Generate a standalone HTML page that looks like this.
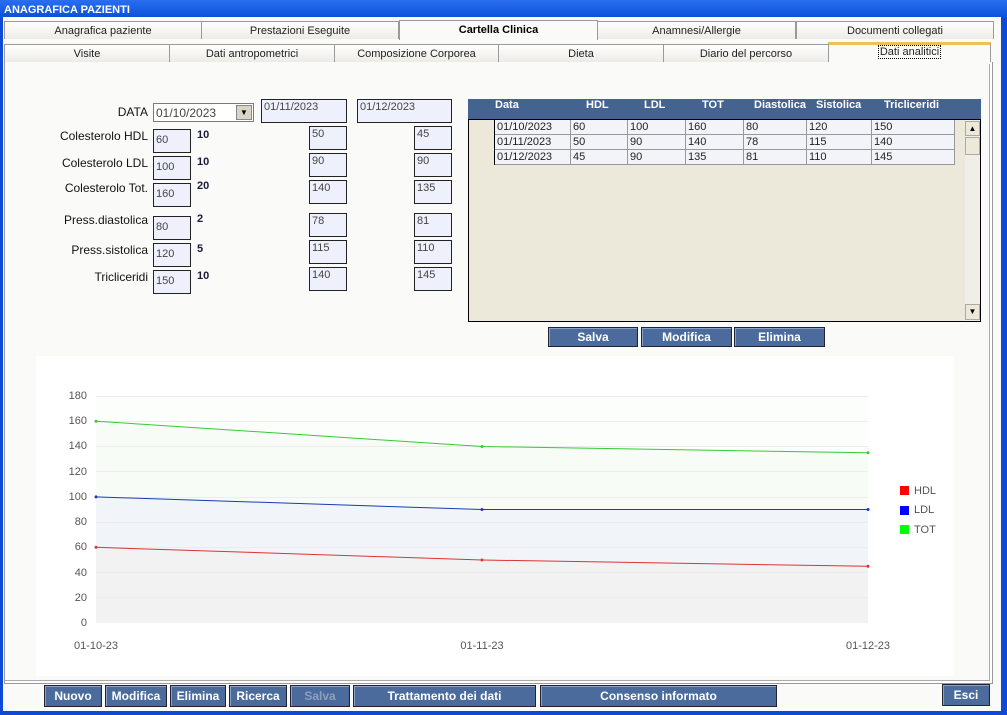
<!DOCTYPE html>
<html><head><style>
*{margin:0;padding:0;box-sizing:border-box}
body{width:1007px;height:715px;overflow:hidden;background:#0d4bd6;font-family:"Liberation Sans",sans-serif;position:relative}
.a{position:absolute}
#win{left:3px;top:17px;width:998px;height:694px;background:#fafbf8}
.title{left:0;top:0;width:1007px;height:18px;background:linear-gradient(#2a6ff0,#0a50d8);color:#fff;font-weight:bold;font-size:11px;padding:4px 0 0 4px;letter-spacing:0}
.tab{position:absolute;height:18px;border:1px solid #9a9a9a;border-bottom:none;background:linear-gradient(#fff,#ecebe6);font-size:11px;text-align:center;line-height:18px;color:#222}
.inp{position:absolute;background:#eef1fb;border:1px solid #222;font-size:11px;color:#444;padding:1px 2px}
.lbl{position:absolute;font-size:12px;color:#111;text-align:right}
.b{position:absolute;font-size:11px;font-weight:bold;color:#1a1a3a}
.btn{position:absolute;background:#4b6b9c;border:1px solid #223;color:#fff;font-weight:bold;font-size:12px;text-align:center;box-shadow:inset 1px 1px 0 #8aa0c4}
.cell{position:absolute;font-size:11px;color:#222;height:15px;border-right:1px solid #999;border-bottom:1px solid #999;padding-left:2px;line-height:14px;background:#f2f4fa}
</style></head><body>
<div class="a title">ANAGRAFICA PAZIENTI</div>
<div class="a" id="win"></div>
<div class="tab" style="left:4px;top:21px;width:198px">Anagrafica paziente</div>
<div class="tab" style="left:201px;top:21px;width:198px">Prestazioni Eseguite</div>
<div class="tab" style="left:399px;top:20px;width:199px;height:20px;background:#fafbf8;font-weight:bold;color:#000">Cartella Clinica</div>
<div class="tab" style="left:597px;top:21px;width:199px">Anamnesi/Allergie</div>
<div class="tab" style="left:796px;top:21px;width:198px">Documenti collegati</div>
<div class="tab" style="left:4px;top:44px;width:166px">Visite</div>
<div class="tab" style="left:169px;top:44px;width:166px">Dati antropometrici</div>
<div class="tab" style="left:334px;top:44px;width:165px">Composizione Corporea</div>
<div class="tab" style="left:498px;top:44px;width:166px">Dieta</div>
<div class="tab" style="left:663px;top:44px;width:166px">Diario del percorso</div>
<div class="tab" style="left:828px;top:42px;width:163px;height:21px;background:#fafbf8;border-top:3px solid #f0c050;line-height:14px"><span style="border:1px dotted #000;padding:0 1px">Dati analitici</span></div>
<div class="a" style="left:4px;top:62px;width:989px;height:622px;border:1px solid #999;border-top:none;box-shadow:inset -2px -2px 0 #fff,inset -3px -3px 0 #aaa"></div>
<div class="a" style="left:828px;top:62px;width:163px;height:2px;background:#fafbf8"></div>

<div class="lbl" style="left:100px;top:105px;width:48px">DATA</div>
<div class="inp" style="left:153px;top:103px;width:101px;height:19px;background:#fff;border-color:#7a7a7a;font-size:12px;padding-top:2px">01/10/2023</div>
<div class="a" style="left:236px;top:105px;width:16px;height:15px;background:#d8d4c6;border:1px solid #888;font-size:8px;text-align:center;line-height:14px">▼</div>
<div class="inp" style="left:261px;top:99px;width:86px;height:24px">01/11/2023</div>
<div class="inp" style="left:357px;top:99px;width:95px;height:24px">01/12/2023</div>

<div class="lbl" style="left:40px;top:129px;width:108px">Colesterolo HDL</div>
<div class="lbl" style="left:40px;top:156px;width:108px">Colesterolo LDL</div>
<div class="lbl" style="left:40px;top:181px;width:108px">Colesterolo Tot.</div>
<div class="lbl" style="left:40px;top:213px;width:108px">Press.diastolica</div>
<div class="lbl" style="left:40px;top:243px;width:108px">Press.sistolica</div>
<div class="lbl" style="left:40px;top:270px;width:108px">Tricliceridi</div>

<div class="inp" style="left:153px;top:129px;width:38px;height:24px;padding-top:4px">60</div>
<div class="inp" style="left:153px;top:156px;width:38px;height:24px;padding-top:4px">100</div>
<div class="inp" style="left:153px;top:183px;width:38px;height:24px;padding-top:4px">160</div>
<div class="inp" style="left:153px;top:216px;width:38px;height:24px;padding-top:4px">80</div>
<div class="inp" style="left:153px;top:243px;width:38px;height:24px;padding-top:4px">120</div>
<div class="inp" style="left:153px;top:270px;width:38px;height:24px;padding-top:4px">150</div>

<div class="b" style="left:197px;top:129px">10</div>
<div class="b" style="left:197px;top:156px">10</div>
<div class="b" style="left:197px;top:180px">20</div>
<div class="b" style="left:197px;top:213px">2</div>
<div class="b" style="left:197px;top:243px">5</div>
<div class="b" style="left:197px;top:270px">10</div>

<div class="inp" style="left:309px;top:126px;width:38px;height:24px">50</div>
<div class="inp" style="left:309px;top:153px;width:38px;height:24px">90</div>
<div class="inp" style="left:309px;top:180px;width:38px;height:24px">140</div>
<div class="inp" style="left:309px;top:213px;width:38px;height:24px">78</div>
<div class="inp" style="left:309px;top:240px;width:38px;height:24px">115</div>
<div class="inp" style="left:309px;top:267px;width:38px;height:24px">140</div>
<div class="inp" style="left:414px;top:126px;width:38px;height:24px">45</div>
<div class="inp" style="left:414px;top:153px;width:38px;height:24px">90</div>
<div class="inp" style="left:414px;top:180px;width:38px;height:24px">135</div>
<div class="inp" style="left:414px;top:213px;width:38px;height:24px">81</div>
<div class="inp" style="left:414px;top:240px;width:38px;height:24px">110</div>
<div class="inp" style="left:414px;top:267px;width:38px;height:24px">145</div>

<div class="a" style="left:468px;top:99px;width:513px;height:20px;background:#456391;color:#fff;font-weight:bold;font-size:11px">
<span class="a" style="left:27px;top:0">Data</span><span class="a" style="left:118px">HDL</span><span class="a" style="left:176px">LDL</span><span class="a" style="left:234px">TOT</span><span class="a" style="left:286px">Diastolica</span><span class="a" style="left:348px">Sistolica</span><span class="a" style="left:416px">Tricliceridi</span></div>
<div class="a" style="left:468px;top:119px;width:513px;height:203px;background:#ece9da;border:1px solid #000"></div>
<div class="a" style="left:965px;top:120px;width:15px;height:201px;background:#f0eee6"></div>
<div class="a" style="left:965px;top:121px;width:15px;height:15px;background:#ece9d8;border:1px solid #aaa;font-size:8px;text-align:center;line-height:13px">▲</div>
<div class="a" style="left:965px;top:137px;width:15px;height:18px;background:#ece9d8;border:1px solid #aaa"></div>
<div class="a" style="left:965px;top:304px;width:15px;height:16px;background:#ece9d8;border:1px solid #aaa;font-size:8px;text-align:center;line-height:14px">▼</div>
<div class="a" style="left:494px;top:120px;width:1px;height:45px;background:#000"></div>
<div id="rows"></div>
<script>
var r=[["01/10/2023","60","100","160","80","120","150"],["01/11/2023","50","90","140","78","115","140"],["01/12/2023","45","90","135","81","110","145"]];
var xs=[495,571,628,686,744,807,872,955];var h="";
r.forEach(function(row,i){row.forEach(function(v,j){h+='<div class="cell" style="left:'+xs[j]+'px;top:'+(120+i*15)+'px;width:'+(xs[j+1]-xs[j])+'px">'+v+'</div>';});});
document.getElementById("rows").innerHTML=h;
</script>
<div class="btn" style="left:548px;top:327px;width:90px;height:20px;line-height:18px">Salva</div>
<div class="btn" style="left:641px;top:327px;width:91px;height:20px;line-height:18px">Modifica</div>
<div class="btn" style="left:734px;top:327px;width:91px;height:20px;line-height:18px">Elimina</div>

<div class="a" style="left:36px;top:356px;width:918px;height:320px;background:#fff"></div>
<svg class="a" style="left:0;top:0" width="1007" height="715" font-family="Liberation Sans" font-size="11" fill="#555">
<polygon points="96,396 868,396 868,623 96,623" fill="#fcfefc"/>
<polygon points="96,421 482,446.5 868,453 868,623 96,623" fill="#f7fdf6"/>
<polygon points="96,497 482,509.5 868,509.5 868,623 96,623" fill="#f1f5f9"/>
<polygon points="96,547.3 482,560 868,566.3 868,623 96,623" fill="#f2f2f2"/>
<g stroke="#ececec" stroke-width="1">
<line x1="96" x2="868" y1="396.5" y2="396.5"/><line x1="96" x2="868" y1="421.5" y2="421.5"/><line x1="96" x2="868" y1="446.5" y2="446.5"/><line x1="96" x2="868" y1="471.5" y2="471.5"/><line x1="96" x2="868" y1="497.5" y2="497.5"/><line x1="96" x2="868" y1="522.5" y2="522.5"/><line x1="96" x2="868" y1="547.5" y2="547.5"/><line x1="96" x2="868" y1="572.5" y2="572.5"/><line x1="96" x2="868" y1="597.5" y2="597.5"/></g>
<g text-anchor="end"><text x="87" y="399">180</text><text x="87" y="424">160</text><text x="87" y="449">140</text><text x="87" y="475">120</text><text x="87" y="500">100</text><text x="87" y="525">80</text><text x="87" y="550">60</text><text x="87" y="576">40</text><text x="87" y="601">20</text><text x="87" y="626">0</text></g>
<g text-anchor="middle"><text x="96" y="649">01-10-23</text><text x="482" y="649">01-11-23</text><text x="868" y="649">01-12-23</text></g>
<polyline points="96,421.2 482,446.5 868,452.8" fill="none" stroke="#3c3" stroke-width="1"/>
<polyline points="96,496.9 482,509.5 868,509.5" fill="none" stroke="#1a3bb0" stroke-width="1"/>
<polyline points="96,547.3 482,560 868,566.3" fill="none" stroke="#d33" stroke-width="1"/>
<g fill="#3c3"><circle cx="96" cy="421.2" r="1.5"/><circle cx="482" cy="446.5" r="1.5"/><circle cx="868" cy="452.8" r="1.5"/></g>
<g fill="#23c"><circle cx="96" cy="496.9" r="1.5"/><circle cx="482" cy="509.5" r="1.5"/><circle cx="868" cy="509.5" r="1.5"/></g>
<g fill="#d33"><circle cx="96" cy="547.3" r="1.5"/><circle cx="482" cy="560" r="1.5"/><circle cx="868" cy="566.3" r="1.5"/></g>
<rect x="900" y="486" width="9" height="9" fill="#f00"/><rect x="900" y="506" width="9" height="9" fill="#00f"/><rect x="900" y="525" width="9" height="9" fill="#0f0"/>
<text x="914" y="494">HDL</text><text x="914" y="513">LDL</text><text x="914" y="533">TOT</text>
</svg>

<div class="btn" style="left:44px;top:685px;width:58px;height:22px;line-height:20px">Nuovo</div>
<div class="btn" style="left:105px;top:685px;width:62px;height:22px;line-height:20px">Modifica</div>
<div class="btn" style="left:170px;top:685px;width:56px;height:22px;line-height:20px">Elimina</div>
<div class="btn" style="left:229px;top:685px;width:58px;height:22px;line-height:20px">Ricerca</div>
<div class="btn" style="left:290px;top:685px;width:60px;height:22px;line-height:20px;color:#8ea0be">Salva</div>
<div class="btn" style="left:353px;top:685px;width:183px;height:22px;line-height:20px">Trattamento dei dati</div>
<div class="btn" style="left:540px;top:685px;width:237px;height:22px;line-height:20px">Consenso informato</div>
<div class="btn" style="left:942px;top:684px;width:48px;height:22px;line-height:20px">Esci</div>
</body></html>
